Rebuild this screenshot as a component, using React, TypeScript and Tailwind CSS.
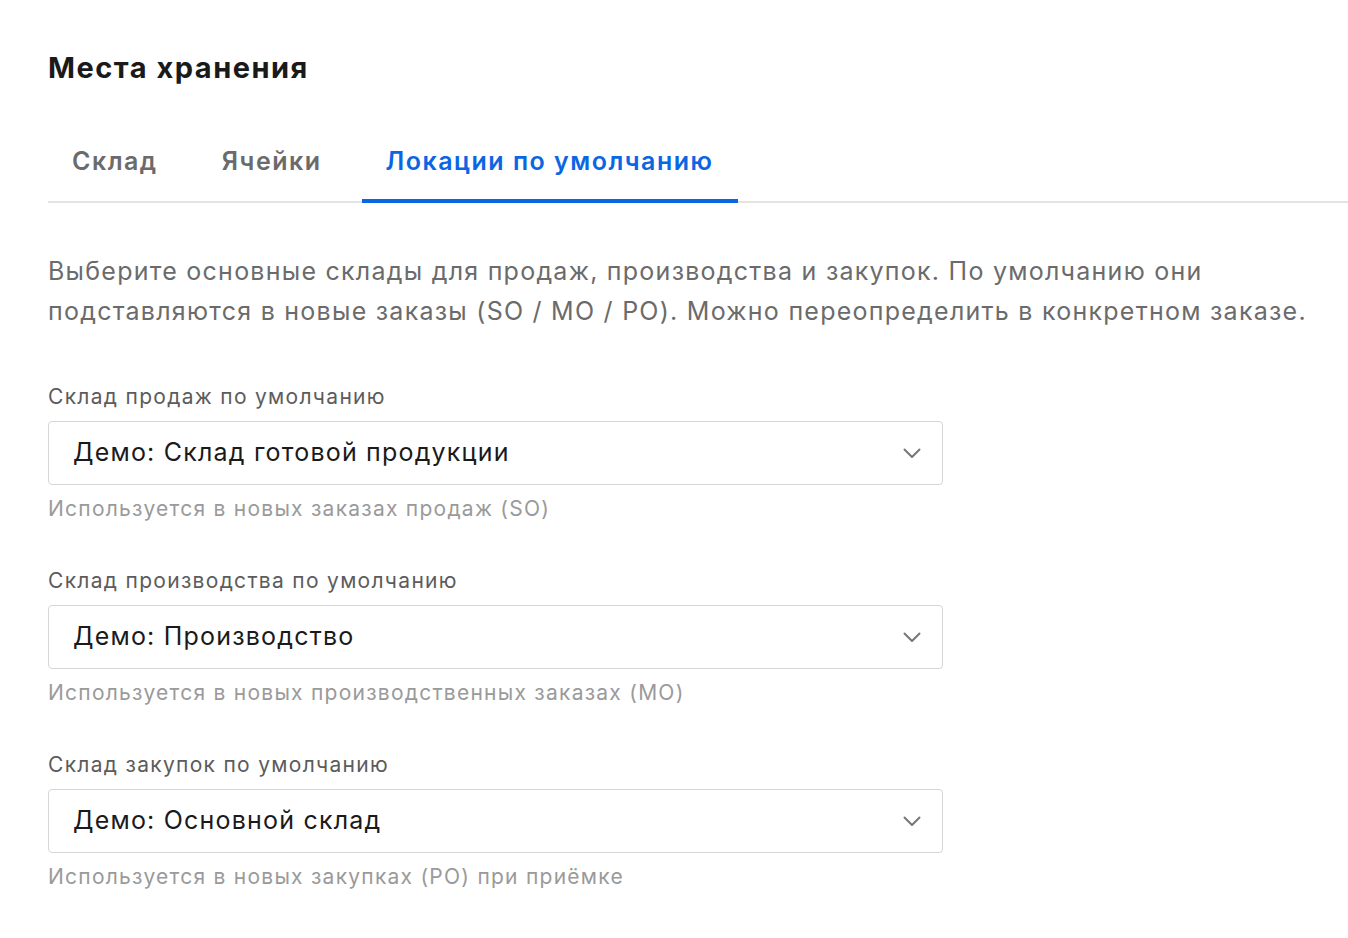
import { useState } from "react"

const tabs = ["Склад", "Ячейки", "Локации по умолчанию"]

const fields = [
  {
    label: "Склад продаж по умолчанию",
    value: "Демо: Склад готовой продукции",
    hint: "Используется в новых заказах продаж (SO)",
  },
  {
    label: "Склад производства по умолчанию",
    value: "Демо: Производство",
    hint: "Используется в новых производственных заказах (MO)",
  },
  {
    label: "Склад закупок по умолчанию",
    value: "Демо: Основной склад",
    hint: "Используется в новых закупках (PO) при приёмке",
  },
]

function Chevron() {
  return (
    <svg width="18" height="11" viewBox="0 0 18 11" fill="none" className="shrink-0">
      <polyline points="1.5,1.5 9,9 16.5,1.5" stroke="#767676" strokeWidth="2" strokeLinecap="round" strokeLinejoin="round" />
    </svg>
  )
}

export default function App() {
  const [active, setActive] = useState(2)

  return (
    <div className="min-h-screen bg-white pl-12 pt-[50px] font-['Inter',sans-serif]">
      <h1 className="text-[29px] leading-9 font-bold tracking-[1.5px] text-[#1a1a1a]">Места хранения</h1>

      <div className="mt-[39px] flex gap-4 border-b-2 border-[#e3e3e3]">
        {tabs.map((t, i) => (
          <button
            key={t}
            onClick={() => setActive(i)}
            className={
              i === active
                ? "px-6 pt-5 pb-[22px] text-[25px] leading-8 font-semibold tracking-[1.5px] text-[#0b66e4] border-b-4 border-[#0b66e4] -mb-[2px]"
                : "px-6 pt-5 pb-[22px] text-[25px] leading-8 font-semibold tracking-[1.5px] text-[#6b6b6b] border-b-4 border-transparent -mb-[2px]"
            }
          >
            {t}
          </button>
        ))}
      </div>

      <p className="mt-[48px] max-w-[1270px] text-[25px] leading-10 tracking-[1.25px] text-[#6b6b6b]">
        Выберите основные склады для продаж, производства и закупок. По умолчанию они подставляются в новые заказы (SO / MO / PO). Можно переопределить в конкретном заказе.
      </p>

      <div className="mt-[52px] flex flex-col gap-[44px]">
        {fields.map((f) => (
          <div key={f.label} className="flex flex-col">
            <label className="text-[21px] leading-7 tracking-[1.3px] text-[#5c5c5c]">{f.label}</label>
            <div className="mt-[10px] flex h-16 w-[895px] items-center justify-between rounded border border-[#d6d6d6] bg-white pl-6 pr-[21px]">
              <span className="text-[25px] tracking-[1.2px] text-[#1a1a1a]">{f.value}</span>
              <Chevron />
            </div>
            <div className="mt-[10px] text-[21px] leading-7 tracking-[1.25px] text-[#9a9a9a]">{f.hint}</div>
          </div>
        ))}
      </div>
    </div>
  )
}
